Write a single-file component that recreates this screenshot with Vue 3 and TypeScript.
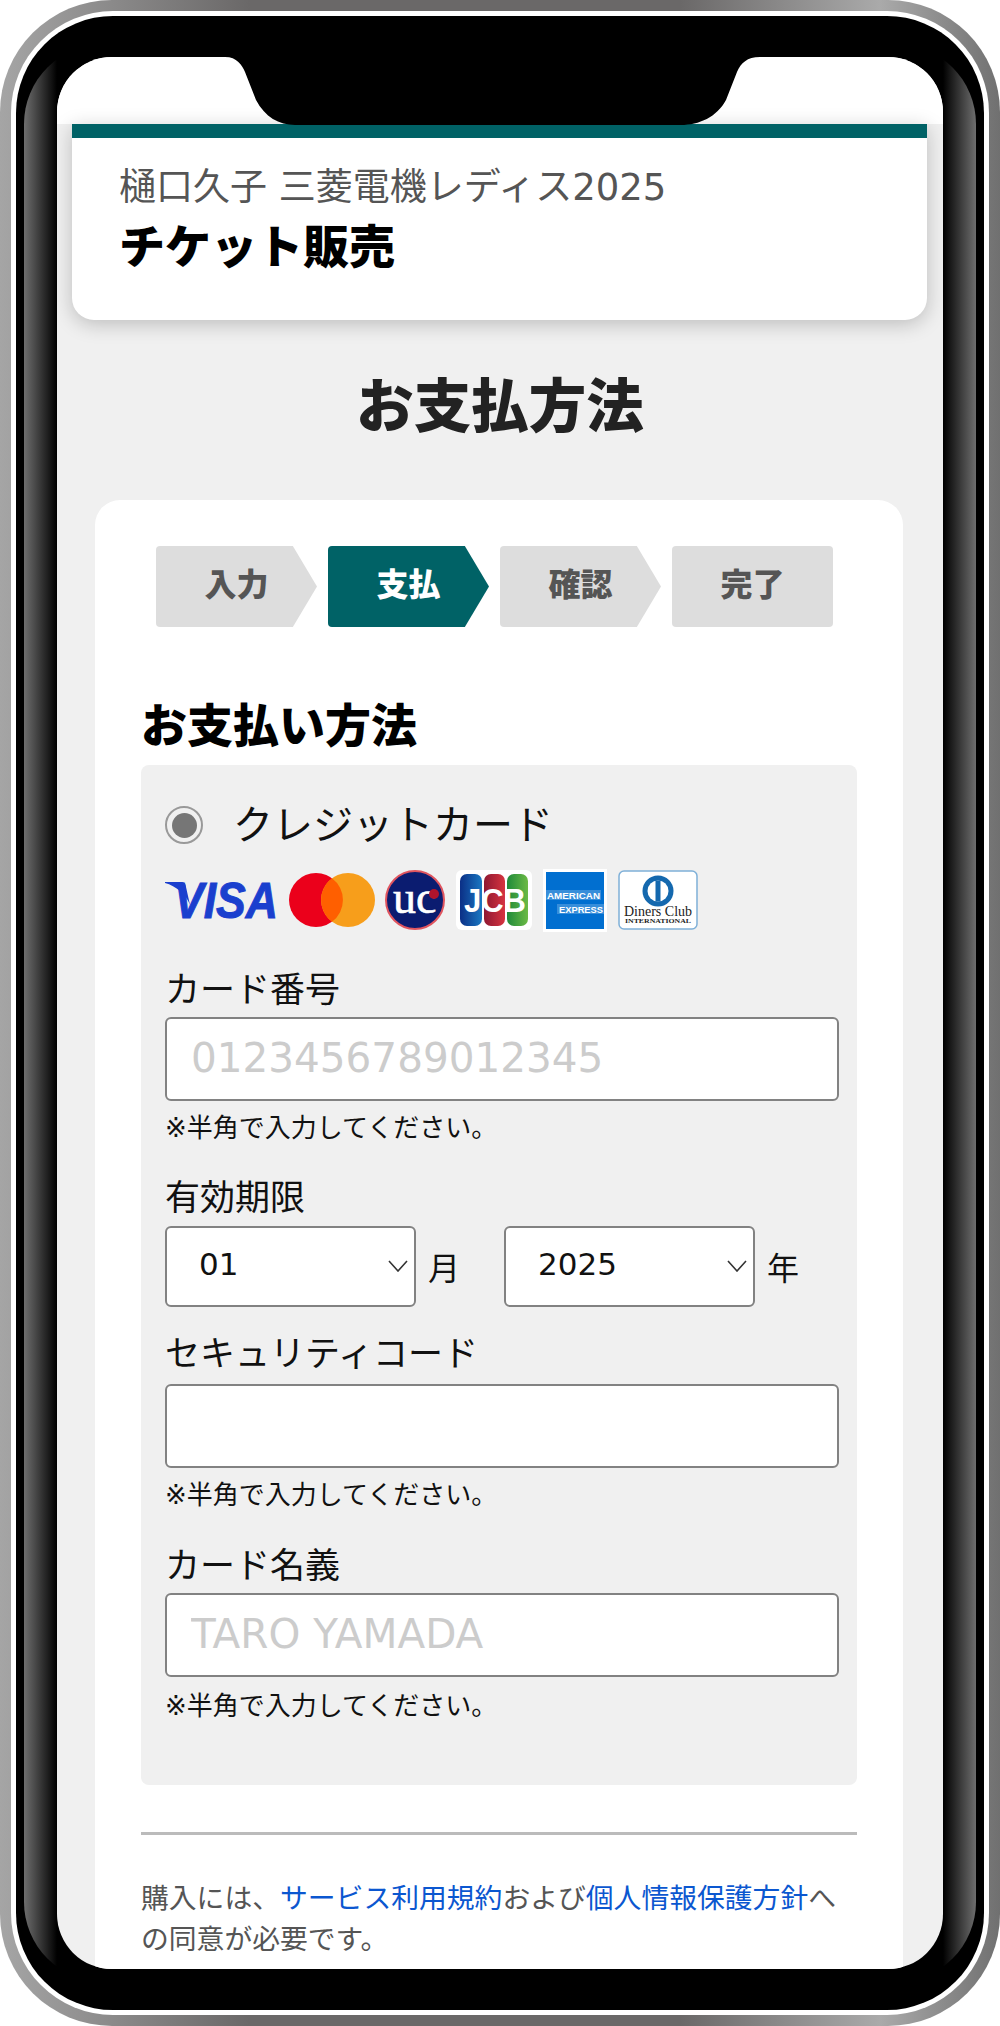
<script setup lang="ts">
import { ref } from 'vue'

const steps = ref([
  { label: '入力', active: false },
  { label: '支払', active: true },
  { label: '確認', active: false },
  { label: '完了', active: false }
])

const months = ['01', '02', '03', '04', '05', '06', '07', '08', '09', '10', '11', '12']
const years = ['2025', '2026', '2027', '2028', '2029', '2030']
const month = ref('01')
const year = ref('2025')
</script>

<template>
  <div class="phone">
    <div class="phone-line">
      <div class="bezel">
        <div class="gloss"></div>
        <div class="screen">
          <div class="status-strip"></div>
          <header class="event-card">
            <p class="event-name">樋口久子 三菱電機レディス2025</p>
            <p class="event-type">チケット販売</p>
          </header>

          <h1 class="page-title">お支払方法</h1>

          <main class="form-card">
            <ol class="steps">
              <li
                v-for="(step, i) in steps"
                :key="step.label"
                :class="['step', { active: step.active, last: i === steps.length - 1 }]"
              >
                {{ step.label }}
              </li>
            </ol>

            <h2 class="section-title">お支払い方法</h2>

            <section class="pay-panel">
              <label class="radio-row">
                <span class="radio"></span>
                <span>クレジットカード</span>
              </label>

              <div class="logos">
                <svg class="logo-visa" viewBox="0 0 113 46">
                  <path d="M0 5h16c3 0 5 2 5 5l4 18C21 17 11 9 0 6z" fill="#1a3fce" />
                  <text x="9" y="41" textLength="104" lengthAdjust="spacingAndGlyphs" class="visa-text">VISA</text>
                </svg>
                <svg class="logo-mc" viewBox="0 0 86 56">
                  <circle cx="27" cy="28" r="27" fill="#eb001b" />
                  <circle cx="59" cy="28" r="27" fill="#f79e1b" />
                  <path d="M43 6.300a27 27 0 0 1 0 43.400a27 27 0 0 1 0-43.400z" fill="#ff5f00" />
                </svg>
                <svg class="logo-uc" viewBox="0 0 60 60">
                  <circle cx="30" cy="30" r="29" fill="#0b1c70" stroke="#e0555f" stroke-width="2" />
                  <text x="8" y="43" class="uc-text">uc</text>
                  <circle cx="49" cy="24" r="5" fill="#b0142c" />
                </svg>
                <svg class="logo-jcb" viewBox="0 0 76 60">
                  <defs>
                    <linearGradient id="jcbBlue" x1="0" x2="1" y1="0" y2="0">
                      <stop offset="0" stop-color="#0b2f86" />
                      <stop offset="1" stop-color="#1a78c2" />
                    </linearGradient>
                    <linearGradient id="jcbRed" x1="0" x2="1" y1="0" y2="0">
                      <stop offset="0" stop-color="#8f1832" />
                      <stop offset="1" stop-color="#d6343f" />
                    </linearGradient>
                    <linearGradient id="jcbGreen" x1="0" x2="1" y1="0" y2="0">
                      <stop offset="0" stop-color="#1f8a3a" />
                      <stop offset="1" stop-color="#6cba45" />
                    </linearGradient>
                  </defs>
                  <rect width="76" height="60" rx="6" fill="#fff" />
                  <rect x="4" y="4" width="22" height="52" rx="7" fill="url(#jcbBlue)" />
                  <rect x="28" y="4" width="21" height="52" rx="7" fill="url(#jcbRed)" />
                  <rect x="51" y="4" width="21" height="52" rx="7" fill="url(#jcbGreen)" />
                  <text x="8" y="42" textLength="62" lengthAdjust="spacingAndGlyphs" class="jcb-text">JCB</text>
                </svg>
                <svg class="logo-amex" viewBox="0 0 64 63">
                  <rect width="64" height="63" fill="#fff" />
                  <rect x="3" y="3" width="58" height="57" fill="#016fd0" />
                  <rect x="3" y="21" width="55" height="10" fill="#fff" opacity=".22" />
                  <rect x="14" y="35" width="47" height="10" fill="#fff" opacity=".22" />
                  <text x="4" y="29.500" textLength="53" lengthAdjust="spacingAndGlyphs" class="amex-text">AMERICAN</text>
                  <text x="16" y="43.500" textLength="44" lengthAdjust="spacingAndGlyphs" class="amex-text">EXPRESS</text>
                </svg>
                <svg class="logo-diners" viewBox="0 0 80 60">
                  <rect x="1" y="1" width="78" height="58" rx="5" fill="#fff" stroke="#7fb0d8" stroke-width="1.500" />
                  <circle cx="40" cy="21" r="15.500" fill="#1468ae" />
                  <circle cx="40" cy="21" r="10.500" fill="#fff" />
                  <rect x="37.500" y="10.500" width="5" height="21" fill="#1468ae" />
                  <text x="40" y="46" class="diners-text">Diners Club</text>
                  <text x="40" y="53" textLength="66" lengthAdjust="spacingAndGlyphs" class="diners-small">INTERNATIONAL</text>
                </svg>
              </div>

              <div class="field first">
                <label class="field-label">カード番号</label>
                <input class="text-input" type="text" placeholder="0123456789012345" />
                <p class="note">※半角で入力してください。</p>
              </div>

              <div class="field">
                <label class="field-label">有効期限</label>
                <div class="expiry">
                  <div class="select-wrap">
                    <select v-model="month" class="select">
                      <option v-for="m in months" :key="m" :value="m">{{ m }}</option>
                    </select>
                    <svg class="chevron" viewBox="0 0 20 12"><path d="M1 1l9 10 9-10" /></svg>
                  </div>
                  <span class="unit month-unit">月</span>
                  <div class="select-wrap">
                    <select v-model="year" class="select">
                      <option v-for="y in years" :key="y" :value="y">{{ y }}</option>
                    </select>
                    <svg class="chevron" viewBox="0 0 20 12"><path d="M1 1l9 10 9-10" /></svg>
                  </div>
                  <span class="unit">年</span>
                </div>
              </div>

              <div class="field tight">
                <label class="field-label">セキュリティコード</label>
                <input class="text-input" type="text" />
                <p class="note">※半角で入力してください。</p>
              </div>

              <div class="field last">
                <label class="field-label">カード名義</label>
                <input class="text-input" type="text" placeholder="TARO YAMADA" />
                <p class="note">※半角で入力してください。</p>
              </div>
            </section>

            <hr class="divider" />

            <p class="agree">
              購入には、<a href="#">サービス利用規約</a>および<a href="#">個人情報保護方針</a>への同意が必要です。
            </p>
          </main>

          <svg class="notch" viewBox="0 0 886 70">
            <path d="M168 0C180 0 185 8 188 15L199 43C208 60 222 68 238 68H624C642 68 660 60 669 43L680 15C684 6 690 0 703 0z" />
          </svg>
        </div>
      </div>
    </div>
  </div>
</template>

<style>
html,
body {
  margin: 0;
  background: #fff;
}
</style>

<style scoped>
.phone {
  width: 1000px;
  height: 2026px;
  box-sizing: border-box;
  padding: 11px;
  border-radius: 112px;
  background: linear-gradient(90deg, #a5a5a5 0%, #6a6868 25%, #6a6868 68%, #aaa 88%, #707070 100%);
  font-family: "DejaVu Sans", "Noto Sans CJK JP", sans-serif;
  color: #111;
}

.phone-line {
  height: 100%;
  box-sizing: border-box;
  padding: 5px;
  border-radius: 102px;
  background: #fff;
}

.bezel {
  position: relative;
  height: 100%;
  box-sizing: border-box;
  padding: 41px;
  border-radius: 97px;
  background: #000;
}

.gloss {
  position: absolute;
  top: 28px;
  bottom: 28px;
  left: 8px;
  right: 8px;
  border-radius: 80px;
  background: linear-gradient(90deg, #6e6e6e 0, #000 33px, #000 calc(100% - 33px), #6e6e6e 100%);
}

.screen {
  position: relative;
  height: 100%;
  overflow: hidden;
  border-radius: 55px;
  background: #f0f0f0;
}

.status-strip {
  height: 67px;
  background: #fff;
}

.event-card {
  margin: 0 16px 0 15px;
  padding: 25px 47px 0;
  height: 196px;
  box-sizing: border-box;
  border-top: 14px solid #006266;
  border-radius: 0 0 22px 22px;
  background: #fff;
  box-shadow: 0 4px 20px rgba(0, 0, 0, 0.22);
}

.event-name {
  margin: 0;
  font-size: 37px;
  line-height: 50px;
  color: #555;
}

.event-type {
  margin: 4px 0 0;
  font-size: 46px;
  line-height: 60px;
  font-weight: 900;
  color: #000;
}

.page-title {
  margin: 0;
  height: 180px;
  font-size: 57.500px;
  line-height: 176px;
  font-weight: 900;
  text-align: center;
  color: #222;
}

.form-card {
  margin: 0 40px 0 38px;
  padding: 46px 46px 0;
  height: 1500px;
  box-sizing: border-box;
  border-radius: 25px;
  background: #fff;
}

.steps {
  display: flex;
  gap: 11px;
  margin: 0 24px 0 15px;
  padding: 0;
  list-style: none;
}

.step {
  flex: 1;
  height: 81px;
  border-radius: 4px;
  background: #ddd;
  font-size: 32px;
  font-weight: 900;
  line-height: 79px;
  text-align: center;
  color: #555;
  clip-path: polygon(0 0, 85% 0, 100% 50%, 85% 100%, 0 100%);
}

.step.active {
  background: #006266;
  color: #fff;
}

.step.last {
  clip-path: none;
}

.section-title {
  margin: 68px 0 0;
  height: 70px;
  padding-top: 6px;
  box-sizing: border-box;
  font-size: 46px;
  line-height: 50px;
  font-weight: 900;
  color: #000;
}

.pay-panel {
  height: 1020px;
  box-sizing: border-box;
  padding: 40px 18px 0 24px;
  border-radius: 8px;
  background: #f0f0f0;
}

.radio-row {
  display: flex;
  align-items: center;
  gap: 30px;
  height: 40px;
  font-size: 40px;
  line-height: 42px;
}

.radio {
  display: flex;
  align-items: center;
  justify-content: center;
  width: 38px;
  height: 38px;
  box-sizing: border-box;
  border: 2px solid #999;
  border-radius: 50%;
}

.radio::after {
  content: "";
  width: 25px;
  height: 25px;
  border-radius: 50%;
  background: #767676;
}

.logos {
  display: flex;
  align-items: center;
  height: 62px;
  margin-top: 24px;
}

.logo-visa {
  width: 113px;
  height: 46px;
  margin-right: 11px;
  overflow: visible;
}

.logo-mc {
  width: 86px;
  height: 56px;
  margin-right: 10px;
}

.logo-uc {
  width: 60px;
  height: 60px;
  margin-right: 11px;
}

.logo-jcb {
  width: 76px;
  height: 60px;
  margin-right: 11px;
}

.logo-amex {
  width: 64px;
  height: 63px;
  margin-right: 11px;
}

.logo-diners {
  width: 80px;
  height: 60px;
}

.visa-text {
  font: italic 700 50px "Liberation Sans", sans-serif;
  fill: #1a3fce;
  stroke: #1a3fce;
  stroke-width: 1;
}

.uc-text {
  font: 400 46px "Liberation Serif", serif;
  fill: #fff;
  stroke: #fff;
  stroke-width: 0.6;
}

.jcb-text {
  font: 700 34px "Liberation Sans", sans-serif;
  fill: #fff;
}

.amex-text {
  font: 700 9.500px "Liberation Sans", sans-serif;
  fill: #fff;
}

.diners-text {
  font: 14px "Liberation Serif", serif;
  fill: #222;
  text-anchor: middle;
}

.diners-small {
  font: 700 7px "Liberation Serif", serif;
  fill: #222;
  text-anchor: middle;
}

.field {
  margin-top: 33px;
}

.field.first {
  margin-top: 37px;
}

.field.tight {
  margin-top: 25px;
}

.field.last {
  margin-top: 34px;
}

.field-label {
  display: block;
  height: 49px;
  font-size: 35px;
  line-height: 44px;
}

.field.tight .field-label {
  height: 52px;
}

.text-input {
  display: block;
  width: 100%;
  height: 84px;
  box-sizing: border-box;
  padding: 0 24px 2px;
  border: 2.500px solid #828282;
  border-radius: 6px;
  background: #fff;
  font-family: inherit;
  font-size: 40.500px;
  color: #111;
  outline: none;
}

.text-input::placeholder {
  color: #ccc;
  opacity: 1;
}

.note {
  margin: 12px 0 0;
  font-size: 26px;
  line-height: 30px;
  color: #111;
}

.field.last .note {
  margin-top: 14px;
}

.expiry {
  display: flex;
  align-items: center;
}

.select-wrap {
  position: relative;
  width: 251px;
  height: 81px;
  margin-top: 1px;
}

.select {
  display: block;
  width: 100%;
  height: 100%;
  box-sizing: border-box;
  padding: 0 0 5px 32px;
  border: 2.500px solid #828282;
  border-radius: 6px;
  background: #fff;
  appearance: none;
  font-family: inherit;
  font-size: 31px;
  color: #111;
  outline: none;
}

.chevron {
  position: absolute;
  right: 8px;
  top: 34px;
  width: 20px;
  height: 12px;
  fill: none;
  stroke: #333;
  stroke-width: 1.600;
}

.unit {
  margin-left: 12px;
  font-size: 32px;
}

.month-unit {
  width: 76px;
}

.divider {
  height: 3px;
  margin: 47px 0 0;
  border: 0;
  background: #bbb;
}

.agree {
  margin: 43px 0 0;
  font-size: 27.800px;
  line-height: 41px;
  color: #555;
}

.agree a {
  color: #0b57d0;
  text-decoration: none;
}

.notch {
  position: absolute;
  top: 0;
  left: 0;
  width: 886px;
  height: 70px;
  fill: #000;
}
</style>
